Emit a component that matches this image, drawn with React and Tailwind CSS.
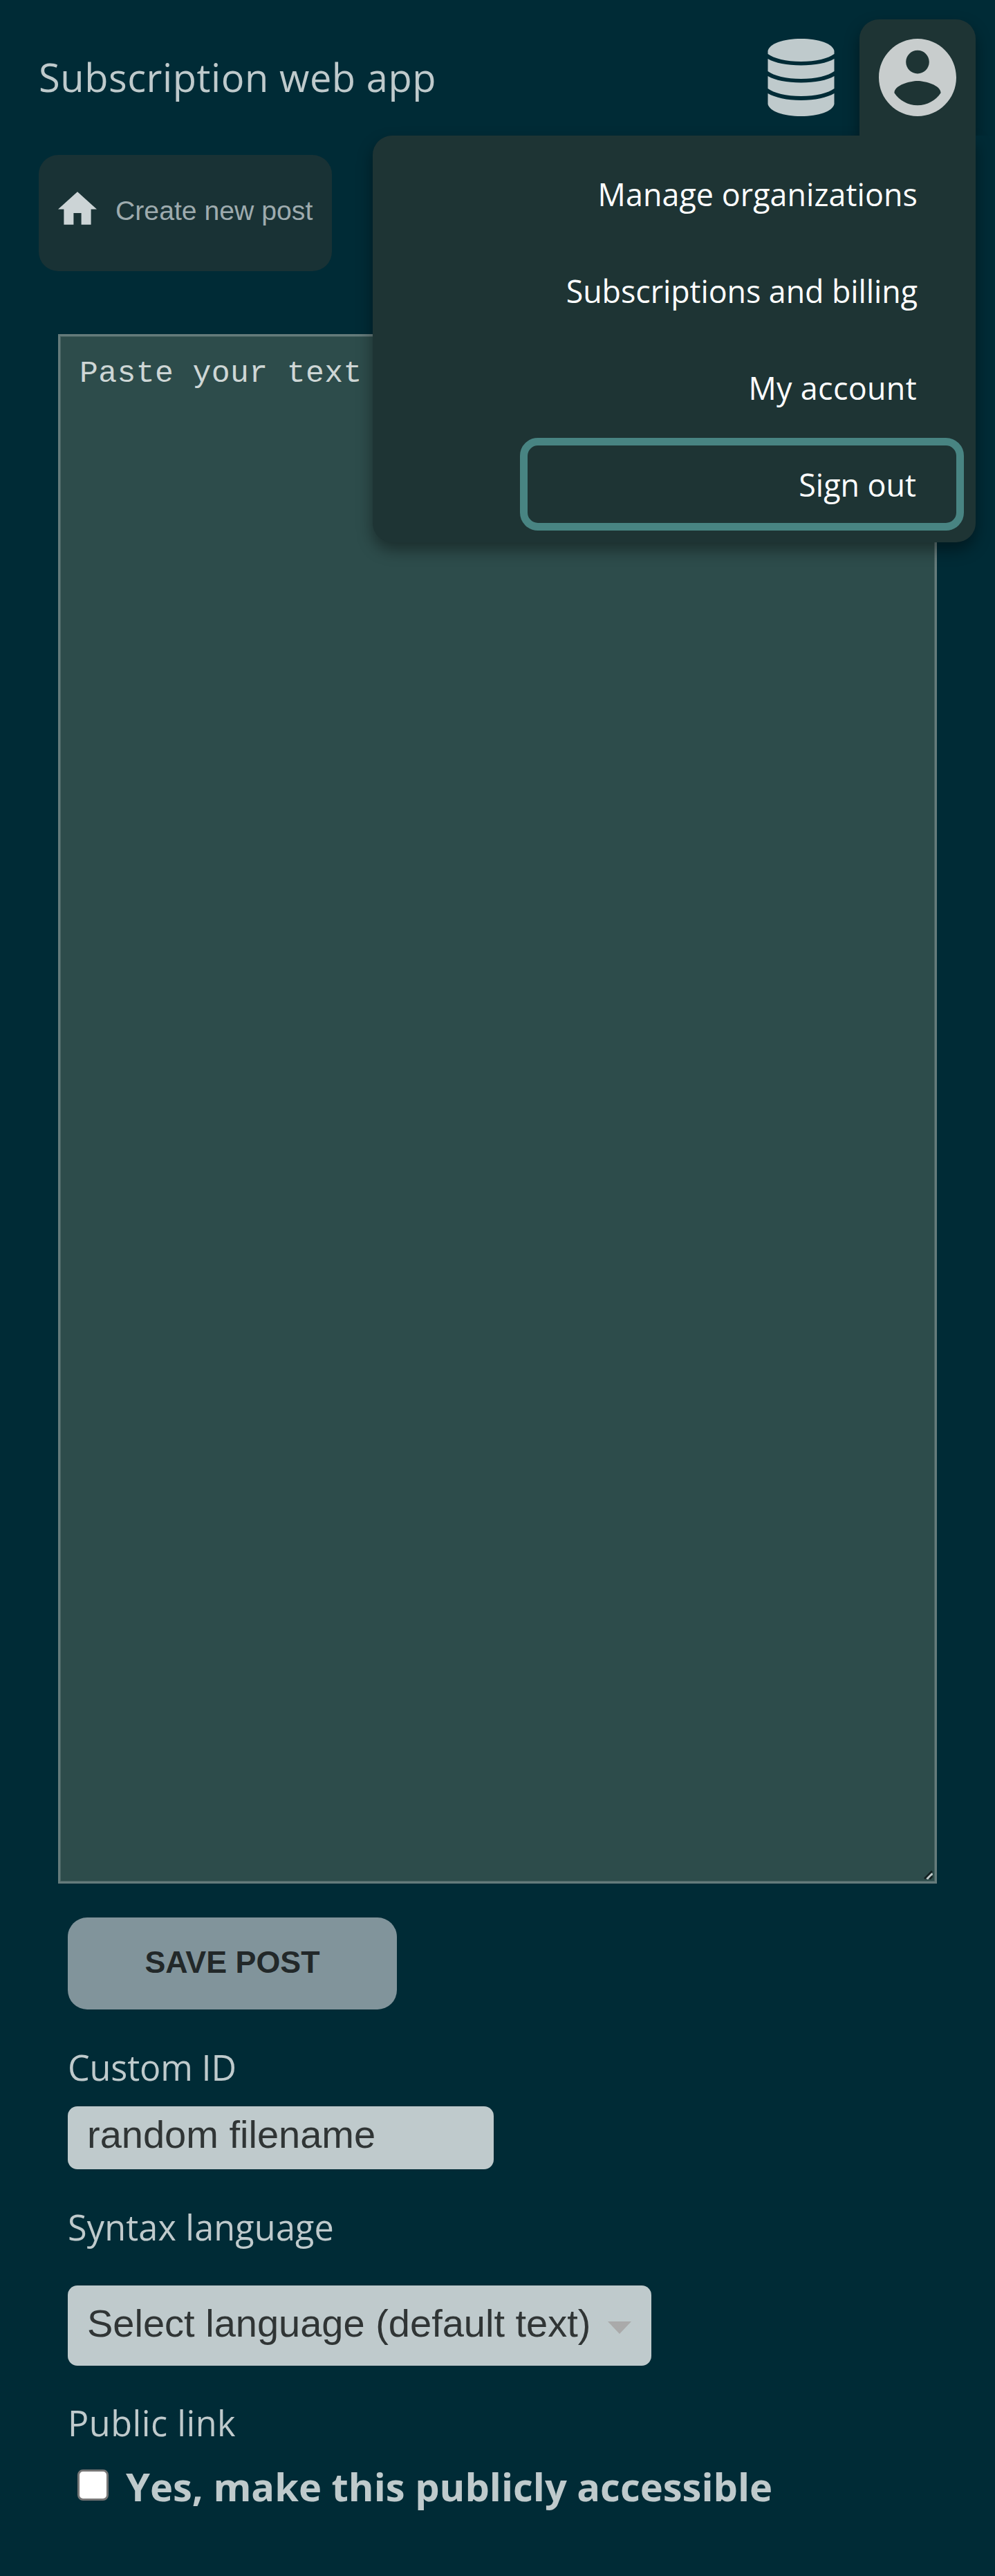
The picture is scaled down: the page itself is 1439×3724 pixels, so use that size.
const sans = "font-['Liberation_Sans',Arial,sans-serif]";

function DatabaseIcon() {
  return (
    <svg viewBox="0 0 98 112" className="h-[112px] w-[98px]" fill="#bfcacc">
      <path d="M0.5 17.5C3 7 23 0 48.5 0S94 7 96.500 17.500V22C88 28.500 70 33 48.500 33S9 28.500 0.500 22Z" />
      <path d="M0.500 29C11 35 28 38.500 48.500 38.500S86 35 96.500 29V47C88 53.500 70 58 48.500 58S9 53.500 0.500 47Z" />
      <path d="M0.500 54C11 60 28 63.500 48.500 63.500S86 60 96.500 54V72C88 78.500 70 83 48.500 83S9 78.500 0.500 72Z" />
      <path d="M0.500 79C11 85 28 89 48.500 89S86 85 96.500 79V94.500C94 105 74 112 48.500 112S3 105 0.500 94.500Z" />
    </svg>
  );
}

function AccountIcon() {
  return (
    <svg viewBox="2 2 20 20" className="h-[112px] w-[112px]" fill="#c8cdcd">
      <path d="M12 2C6.480 2 2 6.480 2 12s4.480 10 10 10 10-4.480 10-10S17.520 2 12 2zm0 3c1.660 0 3 1.340 3 3s-1.340 3-3 3-3-1.340-3-3 1.340-3 3-3zm0 14.200c-2.500 0-4.710-1.280-6-3.220.030-1.990 4-3.080 6-3.080 1.990 0 5.970 1.090 6 3.080-1.290 1.940-3.500 3.220-6 3.220z" />
    </svg>
  );
}

const menuItems = [
  { label: "Manage organizations", spacing: "pr-[84px] tracking-[0.08px]" },
  { label: "Subscriptions and billing", spacing: "pr-[84px] tracking-[-0.06px]" },
  { label: "My account", spacing: "pr-[85px] tracking-[0.35px]" },
];

function AccountMenu() {
  return (
    <nav className="absolute right-7 top-[196px] z-10 flex h-[588px] w-[872px] flex-col items-end rounded-[28px] rounded-tr-none bg-[#1e3434] py-[14px] text-[44.8px] text-white shadow-[0_11px_22px_rgba(0,0,0,0.4)]">
      {menuItems.map(({ label, spacing }) => (
        <a key={label} className={`flex h-[140px] items-center pt-[2px] ${spacing}`}>{label}</a>
      ))}
      <a className="mr-[17px] mt-[3px] flex h-[134px] w-[642px] items-center justify-end rounded-[26px] border-[11px] border-[#488482] pr-[58px] pt-[2px]">Sign out</a>
    </nav>
  );
}

export default function App() {
  return (
    <div className="relative h-[3724px] w-[1439px] overflow-hidden bg-[#002b36] font-['Open_Sans',sans-serif] text-[#bfcacc]">
      <header className="flex h-[196px] items-start justify-between pl-14 pr-7 pt-7">
        <h1 className="mt-[45px] text-[56px] leading-[76px] tracking-[0.55px]">Subscription web app</h1>
        <div className="flex">
          <div className="mr-[35px] mt-7"><DatabaseIcon /></div>
          <div className="relative z-20 h-[168px] w-[168px] rounded-t-[28px] bg-[#1e3434] p-7 shadow-[0_11px_22px_rgba(0,0,0,0.4)] [clip-path:inset(-40px_-40px_0px_-40px)]"><AccountIcon /></div>
        </div>
      </header>
      <AccountMenu />
      <div className={`${sans} ml-14 mt-7 flex h-[168px] w-[424px] items-center rounded-[28px] bg-[#193235] pl-7 text-[39.2px] text-[#9eabae]`}>
        <svg viewBox="2 3 20 17" className="-mt-[14px] mr-[27px] h-[48px] w-[56px]" fill="#ccd4d6"><path d="M10 20v-6h4v6h5v-8h3L12 3 2 12h3v8z" /></svg>
        <span className="-mt-[5px] whitespace-nowrap">Create new post</span>
      </div>
      <main className="pl-[84px]">
        <div className="relative mt-[91px] w-[1271px]">
          <textarea
            placeholder="Paste your text here"
            className="block h-[2240px] w-full resize-none border-[3px] border-[#657b7b] bg-[#2d4c4b] px-[28px] py-[21px] font-['Liberation_Mono',monospace] text-[44.8px] tracking-[0.36px] shadow-[inset_0_0_0_1px_#476261] placeholder:text-[#ced6d5]"
          />
          <svg viewBox="0 0 13 13" className="absolute bottom-[6px] right-[6px] h-[13px] w-[13px]" fill="none" strokeWidth="2.6">
            <path d="M1 12L12 1" stroke="#132021" />
            <path d="M4.500 12.500L12.500 4.500" stroke="#c0c9c9" strokeWidth="3" />
            <path d="M8.500 12.500L12.500 8.500" stroke="#132021" />
          </svg>
        </div>
        <div className="pl-[14px]">
          <button className={`${sans} mt-[49px] block h-[133px] w-[476px] rounded-[28px] bg-[#81949b] pb-[3px] text-[44.8px] font-bold text-[#222829]`}>SAVE POST</button>
          <label className="mt-[50px] block text-[50.4px] leading-[68px] tracking-[-0.15px]">Custom ID</label>
          <div className={`${sans} mt-[22px] flex h-[91px] w-[616px] items-center rounded-[14px] bg-[#bfcacc] px-7 pb-[10px] text-[56px] text-[#303535]`}>random filename</div>
          <label className="mt-[50px] block text-[50.4px] leading-[68px] tracking-[0.15px]">Syntax language</label>
          <div className={`${sans} mt-[50px] flex h-[116px] w-[844px] items-center justify-between rounded-[14px] bg-[#bfcacc] pl-7 pr-[29px] text-[56px] text-[#303535]`}>
            <span className="whitespace-nowrap pb-[7px]">Select language (default text)</span>
            <svg viewBox="0 0 34 18" className="mt-[5px] h-[18px] w-[34px]" fill="#aaa"><path d="M0 0H34L17 18Z" /></svg>
          </div>
          <label className="mt-[49px] block text-[50.4px] leading-[68px] tracking-[0.5px]">Public link</label>
          <div className="mt-[19px] flex items-center pl-[14px]">
            <span className="-mt-[3px] mr-[25px] h-[45px] w-[45px] rounded-[8px] border-[3px] border-[#767676] bg-white" />
            <span className="whitespace-nowrap text-[56px] font-bold leading-[76px]">Yes, make this publicly accessible</span>
          </div>
        </div>
      </main>
    </div>
  );
}
